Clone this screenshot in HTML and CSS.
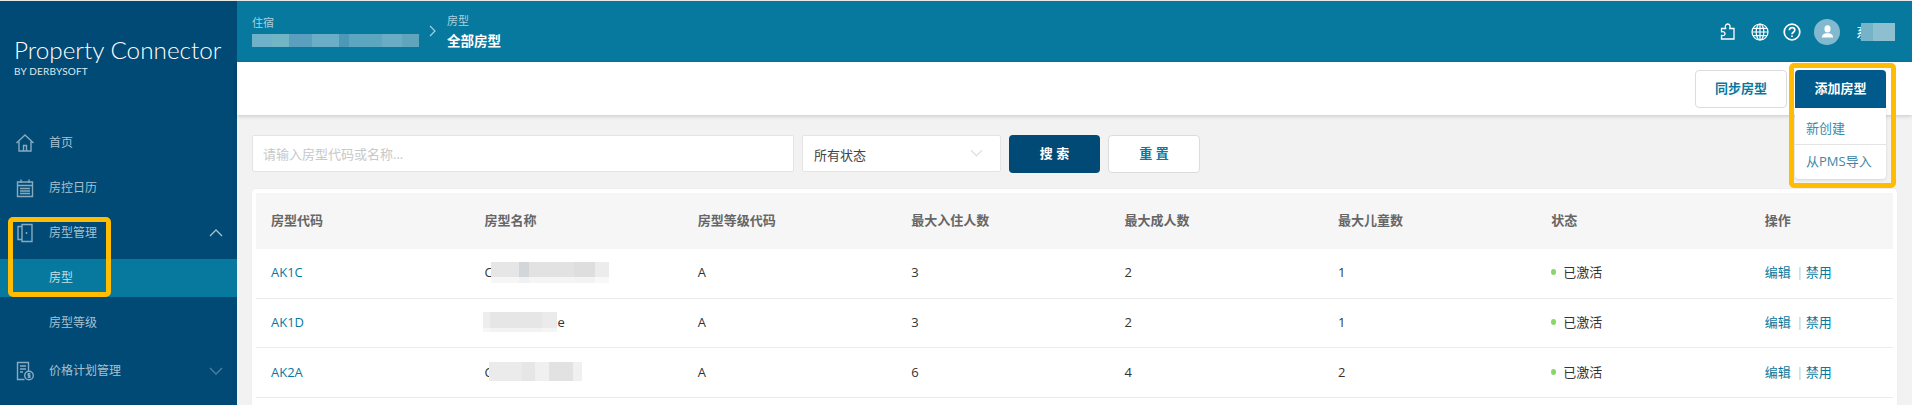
FILE: index.html
```html
<!DOCTYPE html>
<html lang="zh-CN">
<head>
<meta charset="utf-8">
<title>Property Connector</title>
<link rel="stylesheet" href="styles.css">
</head>
<body>
<div class="app">
  <aside class="sidebar">
    <div class="logo">
      <div class="logo-name">Property Connector</div>
      <div class="logo-sub">BY DERBYSOFT</div>
    </div>
    <nav class="nav">
      <a class="nav-item">
        <svg class="nav-icon" viewBox="0 0 20 20"><path d="M1.500 10 10 2l8.500 8M4 8.500V18h4.500v-5.500h3V18H16V8.500M4 18h12"/></svg>
        <span>首页</span>
      </a>
      <a class="nav-item">
        <svg class="nav-icon" viewBox="0 0 20 20"><path d="M2.500 4h15v14.500h-15zM6 1.500V5M14 1.500V5M2.500 7.500h15M5 10.500h10M5 13h10M5 15.500h10"/></svg>
        <span>房控日历</span>
      </a>
      <a class="nav-item">
        <svg class="nav-icon" viewBox="0 0 20 20"><path d="M7 3.500H3v13h4M7 1.500h10v17H7zM11.500 9v2"/></svg>
        <span>房型管理</span>
        <svg class="chev" viewBox="0 0 14 8"><path d="M1 7l6-6 6 6"/></svg>
      </a>
      <div class="subnav">
        <a class="sub-item active">房型</a>
        <a class="sub-item">房型等级</a>
      </div>
      <a class="nav-item">
        <svg class="nav-icon" viewBox="0 0 20 20"><path d="M13.500 10V1.500H2.500v17h7M5 5h6M5 8h6M5 11h3"/><circle cx="14" cy="14.500" r="4.300"/><path d="M15.300 12.800h-2v1.700h1.500v1.700h-2"/></svg>
        <span>价格计划管理</span>
        <svg class="chev dim" viewBox="0 0 14 8"><path d="M1 1l6 6 6-6"/></svg>
      </a>
    </nav>
    <div class="mark mark-nav"></div>
  </aside>

  <main class="main">
    <header class="topbar">
      <div class="crumb crumb-first">
        <div class="crumb-label">住宿</div>
        <div class="mosaic m-hotel"></div>
      </div>
      <svg class="crumb-sep" viewBox="0 0 8 12"><path d="M1 1l5 5-5 5"/></svg>
      <div class="crumb">
        <div class="crumb-label">房型</div>
        <div class="crumb-title">全部房型</div>
      </div>
      <div class="top-tools">
        <svg class="tool puzzle" viewBox="0 0 15 17"><path d="M1.500 16V12.500C4 13 5 12 5 10.700 5 9.300 3.800 8.300 1.500 8.800V5.500H5.600C4.700 3 5.800 1 7.700 1 9.600 1 10.700 3 9.800 5.500H14V16Z"/></svg>
        <svg class="tool globe" viewBox="0 0 18 18"><circle cx="9" cy="9" r="8"/><ellipse cx="9" cy="9" rx="3.800" ry="8"/><path d="M9 1v16M1 9h16M2 5.300h14M2 12.700h14"/></svg>
        <svg class="tool help" viewBox="0 0 18 18"><circle cx="9" cy="9" r="7.800"/><path d="M6.300 7.200C6.300 5.600 7.500 4.700 9 4.700c1.600 0 2.800 1 2.800 2.300 0 2.200-2.800 2.200-2.800 4.300M9 12.500v1.500"/></svg>
        <div class="avatar">
          <svg class="avatar-user" viewBox="0 0 14 14"><ellipse cx="7" cy="4.200" rx="3.300" ry="3.800"/><path d="M1 13.500c0-3 2-4 4-4.500h4c2 .5 4 1.500 4 4.500z"/></svg>
        </div>
        <div class="user"><span class="user-initial">系</span><span class="mosaic m-user"></span></div>
      </div>
    </header>

    <div class="toolbar">
      <button class="btn btn-light">同步房型</button>
      <div class="add-wrap">
        <button class="btn btn-add">添加房型</button>
        <div class="add-menu">
          <a class="menu-item">新创建</a>
          <a class="menu-item">从PMS导入</a>
        </div>
        <div class="mark mark-add"></div>
      </div>
    </div>

    <section class="content">
      <form class="filters">
        <div class="field field-search">请输入房型代码或名称...</div>
        <div class="field field-select">
          <span class="select-value">所有状态</span>
          <svg class="select-chev" viewBox="0 0 14 8"><path d="M1 1l6 6 6-6"/></svg>
        </div>
        <button type="button" class="btn btn-primary">搜 索</button>
        <button type="button" class="btn btn-light btn-reset">重 置</button>
      </form>

      <div class="card">
        <div class="row row-head">
          <div>房型代码</div><div>房型名称</div><div>房型等级代码</div><div>最大入住人数</div><div>最大成人数</div><div>最大儿童数</div><div>状态</div><div>操作</div>
        </div>
        <div class="row">
          <div class="link">AK1C</div>
          <div class="name"><span>C</span><span class="mosaic m-name1"></span></div>
          <div>A</div><div>3</div><div>2</div><div>1</div>
          <div class="status"><i class="dot"></i>已激活</div>
          <div class="actions"><a>编辑</a><b>|</b><a>禁用</a></div>
        </div>
        <div class="row">
          <div class="link">AK1D</div>
          <div class="name"><span class="mosaic m-name2"></span><span>e</span></div>
          <div>A</div><div>3</div><div>2</div><div>1</div>
          <div class="status"><i class="dot"></i>已激活</div>
          <div class="actions"><a>编辑</a><b>|</b><a>禁用</a></div>
        </div>
        <div class="row">
          <div class="link">AK2A</div>
          <div class="name"><span>C</span><span class="mosaic m-name3"></span></div>
          <div>A</div><div>6</div><div>4</div><div>2</div>
          <div class="status"><i class="dot"></i>已激活</div>
          <div class="actions"><a>编辑</a><b>|</b><a>禁用</a></div>
        </div>
      </div>
    </section>
  </main>
</div>
</body>
</html>
```

FILE: styles.css
```css
* { box-sizing: border-box; }
html, body { height: 100%; margin: 0; }
body {
  overflow: hidden;
  padding-top: 1px;
  background: #e9e9e9;
  color: #333;
  font: 13px/18px "Open Sans", "Noto Sans CJK SC", sans-serif;
}
svg { display: block; fill: none; }
.app { display: grid; grid-template-columns: 237px 1fr; height: 404px; }

/* sidebar */
.sidebar { position: relative; background: #004a75; overflow: hidden; }
.logo { height: 119px; padding: 34px 0 0 14px; color: #fff; }
.logo-name { font: 300 24.300px/30px Lato, sans-serif; white-space: nowrap; }
.logo-sub { font: 400 10px/12px Lato, sans-serif; letter-spacing: .2px; color: #dfe9ef; }
.nav-item {
  display: flex;
  align-items: center;
  height: 45px;
  padding-left: 15px;
  color: #a6c1d1;
  font-size: 12px;
}
.nav-icon { width: 20px; height: 20px; margin-right: 14px; stroke: #88aabf; stroke-width: 1.400; }
.chev { width: 14px; height: 8px; margin-left: auto; margin-right: 14px; stroke: #a6c1d1; stroke-width: 1.300; }
.chev.dim { stroke: #4f7f9d; }
.subnav { display: flex; flex-direction: column; gap: 7px; padding: 4px 0 6px; }
.sub-item {
  display: flex;
  align-items: center;
  height: 38px;
  padding-left: 49px;
  color: #a6c1d1;
  font-size: 12px;
}
.sub-item.active { background: #07799f; color: #c4dde6; }
.mark { position: absolute; border: 5px solid #ffbc00; border-radius: 5px; pointer-events: none; }
.mark-nav { left: 8px; top: 216px; width: 103px; height: 80px; }

/* top bar */
.main { display: flex; flex-direction: column; min-width: 0; background: #f2f2f2; }
.topbar { display: flex; align-items: center; flex: none; height: 61px; padding-left: 15px; background: #07799f; color: #fff; }
.crumb-first { width: 167px; }
.crumb-label { font-size: 11px; line-height: 14px; color: #a8d0de; }
.crumb-title { margin-top: 4px; font-size: 13.500px; line-height: 18px; font-weight: 700; }
.crumb-sep { width: 8px; height: 12px; margin: -2px 10px 0 10px; stroke: #a8d0de; stroke-width: 1.200; }
.top-tools { display: flex; align-items: center; margin-left: auto; }
.tool { stroke: #fff; }
.puzzle { width: 15px; height: 17px; stroke-width: 1.300; margin-right: 16px; }
.globe { width: 18px; height: 18px; stroke-width: 1.200; margin-right: 14px; }
.help { width: 18px; height: 18px; stroke-width: 1.700; margin-right: 13px; }
.avatar { display: flex; align-items: center; justify-content: center; width: 26px; height: 26px; border-radius: 50%; background: #82b9ce; margin-right: 16px; }
.avatar-user { width: 13px; height: 13px; fill: #fff; }
.user { display: flex; align-items: center; width: 56px; height: 18px; }
.user-initial { flex: none; font-size: 13px; line-height: 18px; }
.mosaic { display: block; flex: none; }
.m-hotel { width: 167px; height: 13px; margin-top: 4px; background: linear-gradient(90deg, #6fb1c8 0 12%, #72b5c4 12% 22%, #5a9fbd 22% 36%, #69adc6 36% 52%, #4b99b6 52% 58%, #5da6bf 58% 78%, #6aacc3 78% 90%, #5fa5bc 90%); }
.m-user { position: relative; width: 34px; height: 18px; margin-left: -8px; background: linear-gradient(90deg, #75b3c9 0 35%, #8ebfd0 35%); }

/* toolbar */
.toolbar {
  position: relative;
  z-index: 2;
  display: flex;
  justify-content: flex-end;
  gap: 8px;
  flex: none;
  height: 53px;
  padding: 8px 26px 0 0;
  background: #fff;
  box-shadow: 0 1px 4px rgba(0, 0, 0, .18);
}
.btn { flex: none; height: 38px; padding: 0 0 2px; border: 1px solid #dcdcdc; border-radius: 4px; background: #fff; font: 700 13px/18px "Open Sans", "Noto Sans CJK SC", sans-serif; }
.btn-light { width: 92px; color: #07799f; }
.add-wrap { position: relative; width: 91px; height: 109px; }
.btn-add { display: block; width: 91px; border: 0; border-radius: 4px 4px 0 0; background: #005a8c; color: #fff; }
.add-menu { background: #fff; border-radius: 0 0 4px 4px; box-shadow: 0 1px 3px rgba(0, 0, 0, .12); }
.menu-item { display: flex; align-items: center; height: 36px; padding: 3px 0 0 11px; color: #3e87a6; font-size: 13px; }
.menu-item + .menu-item { height: 35px; padding: 0 0 2px 11px; border-top: 1px solid #e4e4e4; }
.mark-add { left: -6px; top: -7px; width: 107px; height: 125px; }

/* filters */
.content { display: flex; flex-direction: column; flex: 1; min-height: 0; padding: 20px 15px 0; }
.filters { display: flex; align-items: flex-start; gap: 8px; flex: none; }
.field { display: flex; align-items: center; height: 37px; background: #fff; border: 1px solid #e4e4e4; border-radius: 2px; }
.field-search { width: 542px; padding-left: 10px; color: #c8c8c8; }
.field-select { position: relative; width: 199px; padding: 0 11px; color: #444; }
.select-value { padding-top: 2px; }
.select-chev { width: 13px; height: 8px; margin: -2px 6px 0 auto; stroke: #e0e0e0; stroke-width: 1.300; }
.btn-primary { width: 91px; border: 0; background: #004a75; color: #fff; }

/* table */
.card { flex: 1; margin-top: 16px; padding: 4px 4px 0; background: #fff; border-radius: 4px 4px 0 0; box-shadow: 0 0 2px rgba(0, 0, 0, .06); overflow: hidden; }
.row {
  display: grid;
  grid-template-columns: repeat(7, 213.400px) 1fr;
  align-items: center;
  height: 49.670px;
  padding: 0 0 2px 15px;
  border-bottom: 1px solid #ececec;
  color: #333;
}
.row-head { height: 56px; background: #f6f6f6; border-bottom: 0; color: #666; font-weight: 700; }
.link { color: #07799f; }
.name { display: flex; align-items: center; }
.m-name1 { width: 118px; height: 21px; margin-left: -2px; background: linear-gradient(180deg, transparent 72%, rgba(255, 255, 255, .65) 72%), linear-gradient(90deg, #e6e6e6 0 24%, #d2d6d9 24% 32%, #e2e2e2 32% 70%, #dedede 70% 88%, #ececec 88%); }
.m-name2 { width: 74px; height: 20px; margin-left: -1px; background: linear-gradient(180deg, transparent 78%, rgba(255, 255, 255, .5) 78%), linear-gradient(90deg, #eee 0 10%, #e6e6e6 10% 80%, #ebebeb 80%); }
.m-name3 { width: 93px; height: 19px; margin-left: -4px; background: linear-gradient(90deg, #ebebeb 0 35%, #e6e6e6 35% 50%, #f0f0f0 50% 65%, #e2e2e2 65% 90%, #f0f0f0 90%); }
.status { display: flex; align-items: center; color: #333; }
.dot { flex: none; width: 5px; height: 6px; margin-right: 7px; border-radius: 50%; background: #8bd46a; }
.actions { display: flex; align-items: center; color: #07799f; white-space: nowrap; }
.actions b { width: 8px; margin: 0 2px 0 5px; font-weight: 400; color: #b8c6cc; text-align: center; }
```
